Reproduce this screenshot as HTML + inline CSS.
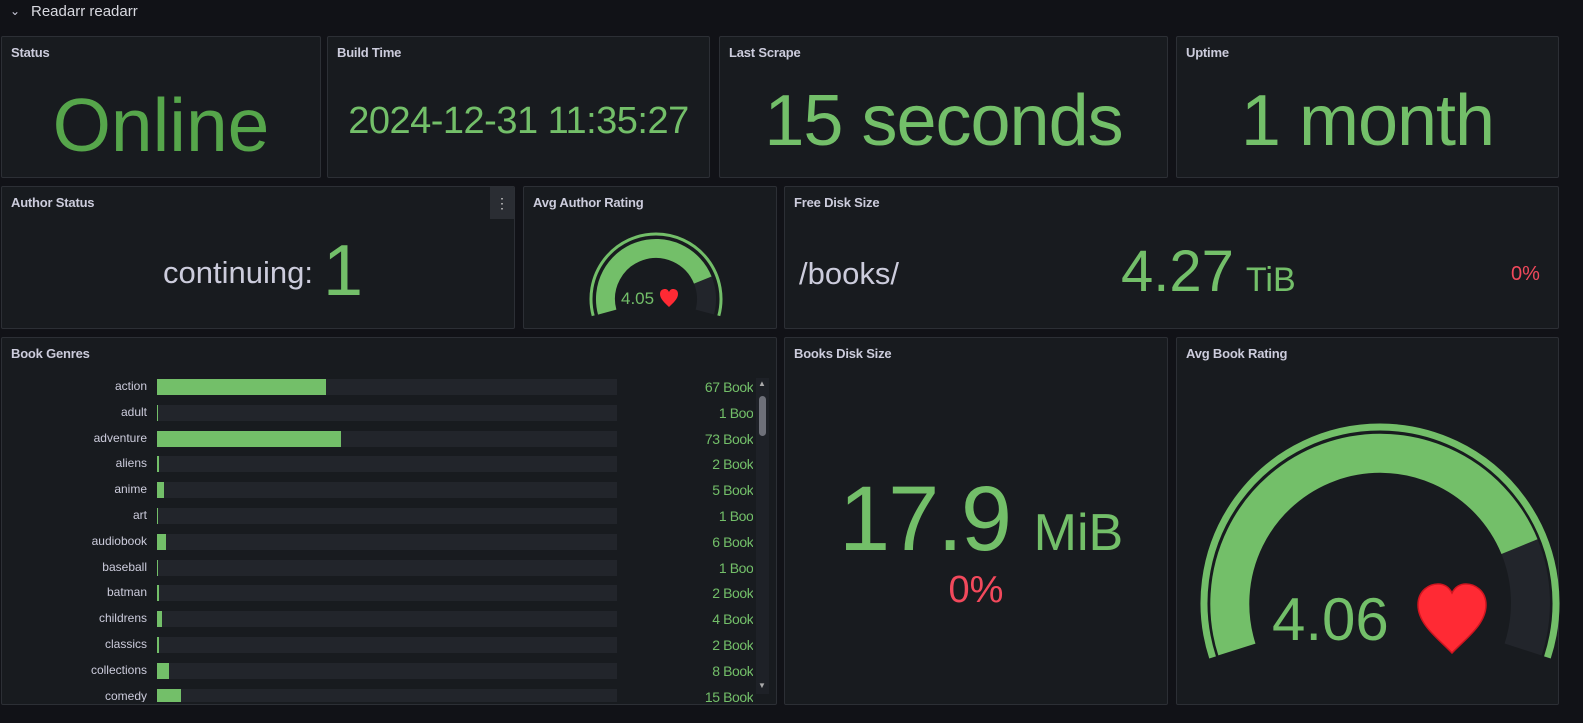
<!DOCTYPE html>
<html><head><meta charset="utf-8"><style>
*{margin:0;padding:0;box-sizing:border-box}
body{width:1583px;height:723px;background:#111217;font-family:"Liberation Sans",sans-serif;color:#ccccdc;position:relative;overflow:hidden}
.p{position:absolute;background:#181b1f;border:1px solid #2c2f35;border-radius:2px;overflow:hidden}
.t{position:absolute;left:9px;top:8px;font-size:13px;font-weight:bold;color:#ccccdc;letter-spacing:-0.2px}
.a{position:absolute;white-space:nowrap;line-height:1}
.g{color:#73bf69}
.r{color:#f2495c}
</style></head><body>
<div class="a" style="left:10px;top:5px;font-size:12px;color:#ccccdc">&#8964;</div>
<div class="a" style="left:31px;top:4px;font-size:15px;color:#d8d9e0">Readarr readarr</div>

<div class="p" style="left:1px;top:36px;width:320px;height:142px"><div class="t">Status</div>
<div class="a" style="left:0;width:318px;text-align:center;top:51px;font-size:75px;color:#56a64b">Online</div></div>
<div class="p" style="left:327px;top:36px;width:383px;height:142px"><div class="t">Build Time</div>
<div class="a g" style="left:0;width:381px;text-align:center;top:65px;font-size:38px;letter-spacing:-0.5px">2024-12-31 11:35:27</div></div>
<div class="p" style="left:719px;top:36px;width:449px;height:142px"><div class="t">Last Scrape</div>
<div class="a g" style="left:0;width:447px;text-align:center;top:48px;font-size:72px;letter-spacing:-1px">15 seconds</div></div>
<div class="p" style="left:1176px;top:36px;width:383px;height:142px"><div class="t">Uptime</div>
<div class="a g" style="left:0;width:381px;text-align:center;top:48px;font-size:72px;letter-spacing:-1px">1 month</div></div>

<div class="p" style="left:1px;top:186px;width:514px;height:143px"><div class="t">Author Status</div>
<div style="position:absolute;right:0;top:0;width:24px;height:32px;background:#2a2d33;color:#ccc;text-align:center;font-size:14px;line-height:32px">&#8942;</div>
<div class="a" style="left:161px;top:70px;font-size:31px;color:#ccccdc">continuing:</div>
<div class="a g" style="left:321px;top:48px;font-size:72px">1</div></div>

<div class="p" style="left:523px;top:186px;width:254px;height:143px"><div class="t">Avg Author Rating</div></div>
<div class="p" style="left:784px;top:186px;width:775px;height:143px"><div class="t">Free Disk Size</div>
<div class="a" style="left:14px;top:71px;font-size:31px;color:#ccccdc">/books/</div>
<div class="a g" style="left:336px;top:56px;font-size:58px">4.27<span style="font-size:34px;margin-left:12px">TiB</span></div>
<div class="a r" style="left:726px;top:77px;font-size:20px">0%</div></div>

<div class="p" style="left:1px;top:337px;width:776px;height:368px"><div class="t">Book Genres</div>
<div style="position:absolute;left:0;top:38px;width:751px;height:326px;overflow:hidden">
<div id="bars"></div>
</div>
<div style="position:absolute;left:754px;top:40px;width:13px;height:316px;background:#1e2127"></div>
<div style="position:absolute;left:757px;top:58px;width:7px;height:40px;background:#6e7079;border-radius:4px"></div>
<div class="a" style="left:756px;top:42px;font-size:8px;color:#aaa">&#9650;</div>
<div class="a" style="left:756px;top:344px;font-size:8px;color:#aaa">&#9660;</div>
</div>

<div class="p" style="left:784px;top:337px;width:384px;height:368px"><div class="t">Books Disk Size</div>
<div class="a g" style="left:54px;top:135px;font-size:92px;letter-spacing:-2px">17.9 <span style="font-size:52px;letter-spacing:0">MiB</span></div>
<div class="a r" style="left:0;width:382px;text-align:center;top:233px;font-size:38px">0%</div></div>
<div class="p" style="left:1176px;top:337px;width:383px;height:368px"><div class="t">Avg Book Rating</div></div>

<svg style="position:absolute;left:0;top:0" width="1583" height="723">
<path d="M1212.6 657.4 A176 176 0 1 1 1547.4 657.4" fill="none" stroke="#73bf69" stroke-width="7"/>
<path d="M1519.5 546.6 A150.5 150.5 0 0 1 1523.1 649.5" fill="none" stroke="#22252b" stroke-width="39"/>
<path d="M1236.9 649.5 A150.5 150.5 0 0 1 1519.5 546.6" fill="none" stroke="#73bf69" stroke-width="39"/>
<text x="1272" y="640" font-family="Liberation Sans" font-size="60" fill="#73bf69">4.06</text>
<path d="M1452 653 C1440 640 1418 625 1418 605 C1418 590 1430 584 1438 584 C1446 584 1450 589 1452 593 C1454 589 1458 584 1466 584 C1474 584 1486 590 1486 605 C1486 625 1464 640 1452 653Z" fill="#ff2a34" stroke="#d0151f" stroke-width="1.5"/>
<path d="M593.2 315.8 A65 65 0 1 1 718.8 315.8" fill="none" stroke="#73bf69" stroke-width="3"/>
<path d="M702.8 280.1 A50.5 50.5 0 0 1 704.8 312.1" fill="none" stroke="#22252b" stroke-width="19"/>
<path d="M607.2 312.1 A50.5 50.5 0 0 1 702.8 280.1" fill="none" stroke="#73bf69" stroke-width="19"/>
<text x="621" y="304" font-family="Liberation Sans" font-size="17" fill="#73bf69">4.05</text>
<path d="M669 307 C665 303 660 299 660 294 C660 290 663 289 665 289 C667 289 668 290 669 292 C670 290 671 289 673 289 C675 289 678 290 678 294 C678 299 673 303 669 307Z" fill="#ff2a34"/>
</svg>
<script>
var d=[["action",169,"67 Books"],["adult",1,"1 Book"],["adventure",184,"73 Books"],["aliens",2,"2 Books"],["anime",7,"5 Books"],["art",1,"1 Book"],["audiobook",9,"6 Books"],["baseball",1,"1 Book"],["batman",2,"2 Books"],["childrens",5,"4 Books"],["classics",2,"2 Books"],["collections",12,"8 Books"],["comedy",24,"15 Books"]];
var h="";d.forEach(function(r,i){var y=3+i*25.8;
h+='<div class="a" style="left:0;width:145px;text-align:right;top:'+(y+1)+'px;font-size:12px;color:#ccccdc">'+r[0]+'</div>';
h+='<div style="position:absolute;left:155px;top:'+y+'px;width:460px;height:16px;background:#22252b"></div>';
h+='<div style="position:absolute;left:155px;top:'+y+'px;width:'+r[1]+'px;height:16px;background:#73bf69"></div>';
h+='<div class="a g" style="left:588px;width:170px;text-align:right;top:'+(y+1)+'px;font-size:14px;letter-spacing:-0.4px">'+r[2]+'</div>';});
document.getElementById("bars").innerHTML=h;
</script>
</body></html>
